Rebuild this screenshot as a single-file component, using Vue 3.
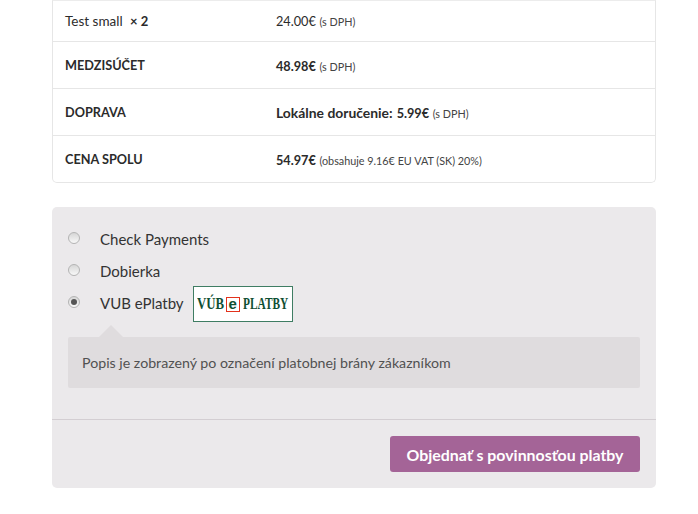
<template>
  <div class="checkout">
    <!-- order totals -->
    <table class="totals">
      <colgroup>
        <col class="col-label" />
        <col />
      </colgroup>
      <tbody>
        <tr class="first">
          <td class="name">Test small <b class="qty">× 2</b></td>
          <td><span class="amount">24.00€</span> <small>(s DPH)</small></td>
        </tr>
        <tr v-for="row in rows" :key="row.label">
          <th>{{ row.label }}</th>
          <td>
            <b v-if="row.prefix" class="prefix">{{ row.prefix }}</b>
            <b class="amount">{{ row.value }}</b> <small>{{ row.note }}</small>
          </td>
        </tr>
      </tbody>
    </table>

    <!-- payment -->
    <div class="payment">
      <ul class="methods">
        <li v-for="m in methods" :key="m.name" class="method">
          <span class="radio" :class="{ checked: m.checked }"></span>
          <span class="method-name">{{ m.name }}</span>
          <span v-if="m.logo" class="logo">
            <span class="logo-vub">VÚB</span>
            <span class="logo-e">e</span>
            <span class="logo-platby">PLATBY</span>
          </span>
        </li>
      </ul>
      <div class="notice">Popis je zobrazený po označení platobnej brány zákazníkom</div>
      <div class="actions">
        <button class="order-btn">Objednať s povinnosťou platby</button>
      </div>
    </div>
  </div>
</template>

<script setup>
const rows = [
  { label: 'MEDZISÚČET', value: '48.98€', note: '(s DPH)' },
  { label: 'DOPRAVA', prefix: 'Lokálne doručenie:', value: '5.99€', note: '(s DPH)' },
  { label: 'CENA SPOLU', value: '54.97€', note: '(obsahuje 9.16€ EU VAT (SK) 20%)' }
]

const methods = [
  { name: 'Check Payments' },
  { name: 'Dobierka' },
  { name: 'VUB ePlatby', checked: true, logo: true }
]
</script>

<style>
html, body {
  margin: 0;
  background: #fff;
  overflow: hidden;
}
</style>

<style scoped>
.checkout {
  width: 604px;
  margin-left: 52px;
  font-family: "Lato", "Noto Sans", sans-serif;
  color: #2b2b2b;
  font-size: 14px;
}

.totals {
  width: 100%;
  border-collapse: separate;
  border-spacing: 0;
  border: 1px solid #e6e6e6;
  border-top: 1px solid #ececec;
  border-radius: 0 0 5px 5px;
  table-layout: fixed;
}

.col-label {
  width: 211px;
}

.totals th,
.totals td {
  padding: 0 12px;
  text-align: left;
  border-top: 1px solid #e6e6e6;
  box-sizing: border-box;
  height: 47px;
}

.totals th {
  font-weight: 700;
  font-size: 12.7px;
}

.first td {
  border-top: none;
  height: 40px;
  padding-bottom: 1px;
}

.name {
  font-size: 13.5px;
}

.qty {
  margin-left: 4px;
  font-size: 13px;
}

.amount {
  font-size: 12.7px;
}

.prefix {
  font-size: 13.9px;
  margin-right: 4px;
}

.totals b {
  font-weight: 700;
}

.totals small {
  font-size: 10.8px;
  color: #444;
}

.payment {
  margin-top: 24px;
  height: 281px;
  box-sizing: border-box;
  background: #ebe9eb;
  border-radius: 5px;
  padding-top: 16px;
  display: flex;
  flex-direction: column;
}

.methods {
  list-style: none;
  margin: 0;
  padding: 0 16px;
}

.method {
  display: flex;
  align-items: center;
  height: 32px;
  font-size: 15px;
  color: #333;
}

.radio {
  width: 12px;
  height: 12px;
  border-radius: 50%;
  box-sizing: border-box;
  border: 1px solid #b4b4b4;
  background: linear-gradient(#d6d6d6, #f8f8f8);
  margin-right: 20px;
  margin-top: -2px;
  position: relative;
}

.radio.checked::after {
  content: "";
  position: absolute;
  left: 2px;
  top: 2px;
  width: 6px;
  height: 6px;
  border-radius: 50%;
  background: #555;
}

.logo {
  margin-left: 9px;
  margin-top: 2px;
  width: 100px;
  height: 36px;
  box-sizing: border-box;
  border: 1px solid #3f7d63;
  background: #fff;
  padding-left: 3px;
  display: flex;
  align-items: center;
  font-family: "Liberation Serif", serif;
  font-weight: 700;
  font-size: 16px;
  color: #0f4f33;
  flex-shrink: 0;
  white-space: nowrap;
}

.logo-vub {
  flex: 0 0 29px;
  min-width: 0;
  transform: scaleX(0.8);
  transform-origin: left center;
}

.logo-e {
  flex: 0 0 14px;
  height: 15px;
  box-sizing: border-box;
  border: 1.5px solid #e2321c;
  display: flex;
  align-items: center;
  justify-content: center;
  font-family: "Liberation Sans", sans-serif;
  font-size: 15px;
  line-height: 1;
  padding-bottom: 2px;
}

.logo-platby {
  flex: 0 0 46px;
  min-width: 0;
  margin-left: 3px;
  transform: scaleX(0.71);
  transform-origin: left center;
}

.notice {
  position: relative;
  margin: 18px 16px 0;
  height: 51px;
  box-sizing: border-box;
  padding: 0 14px;
  display: flex;
  align-items: center;
  background: #dfdcde;
  border-radius: 2px;
  font-size: 14.2px;
  color: #515151;
}

.notice::before {
  content: "";
  position: absolute;
  left: 31px;
  top: -12px;
  border: 12px solid transparent;
  border-top: none;
  border-bottom-color: #dfdcde;
}

.actions {
  margin-top: 31px;
  border-top: 1px solid #d3ced2;
  padding: 16px 16px 0;
  display: flex;
  justify-content: flex-end;
}

.order-btn {
  width: 250px;
  height: 36px;
  border: none;
  border-radius: 3px;
  background: #a46497;
  color: #fff;
  font-family: inherit;
  font-weight: 700;
  font-size: 15.9px;
  padding: 0;
}
</style>
